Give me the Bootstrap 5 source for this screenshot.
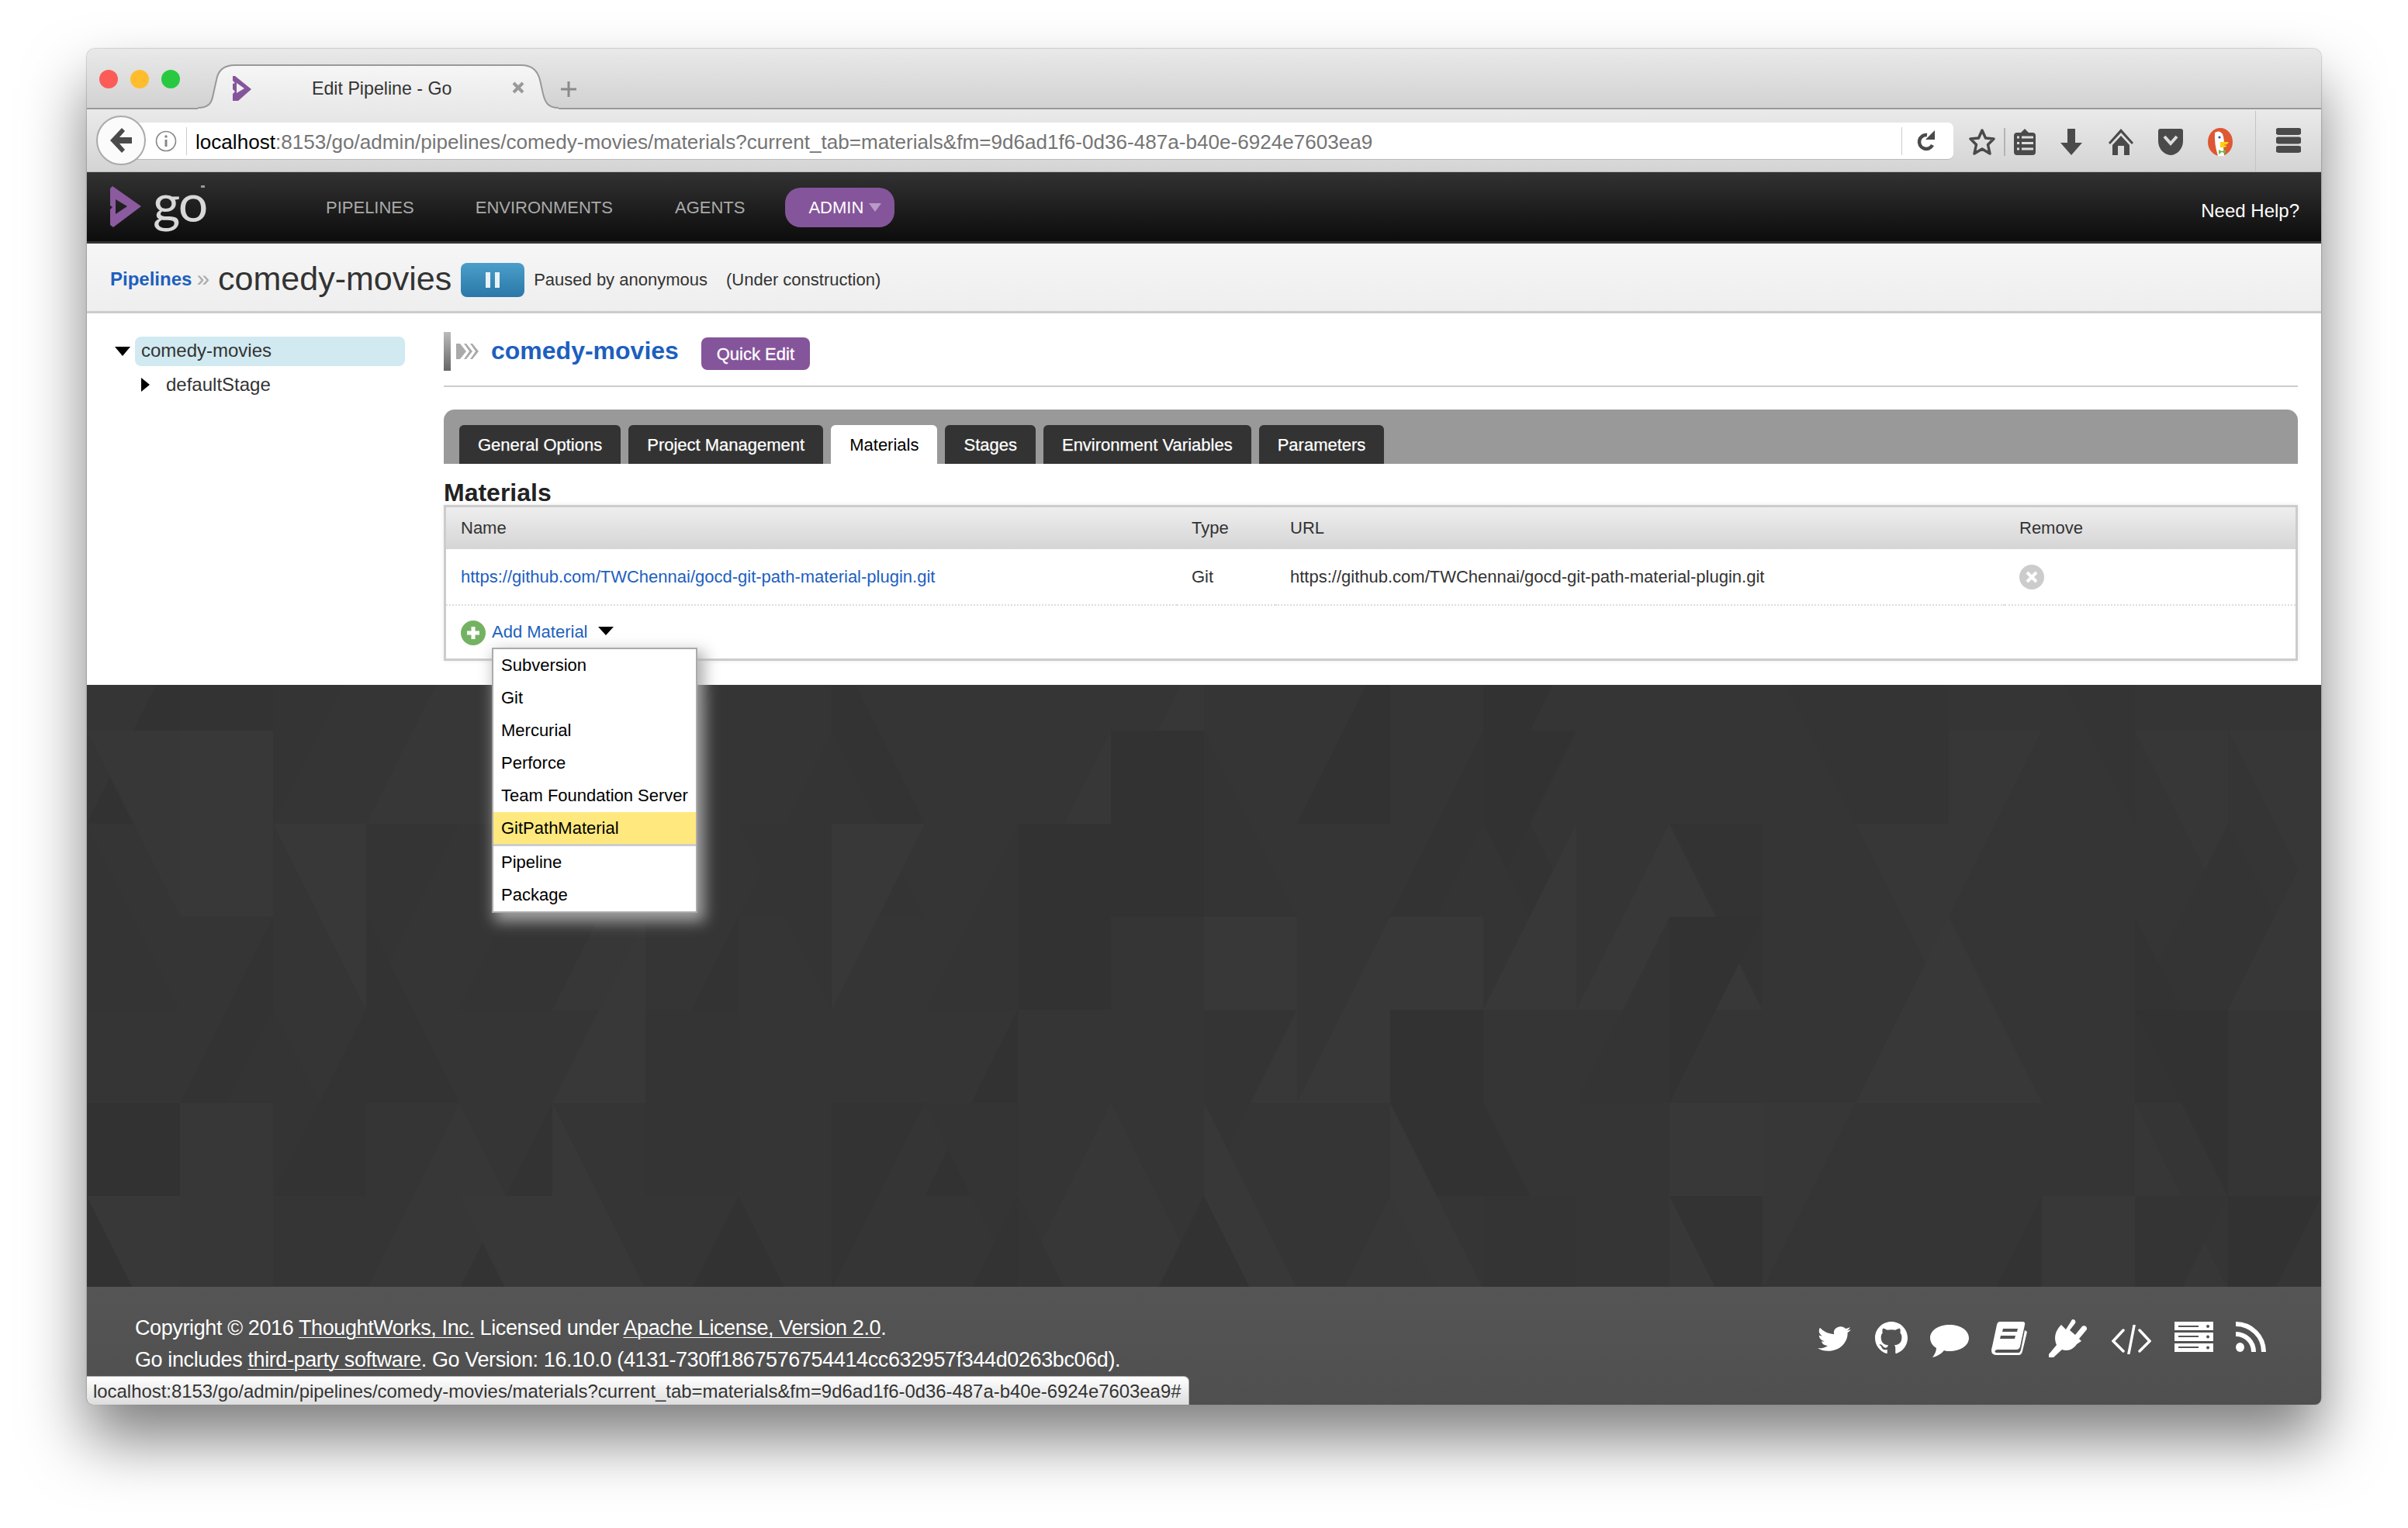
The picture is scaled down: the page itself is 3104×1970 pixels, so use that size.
<!DOCTYPE html>
<html lang="en">
<head>
<meta charset="UTF-8">
<title>Edit Pipeline - Go</title>
<link href="https://cdn.jsdelivr.net/npm/bootstrap@5.3.0/dist/css/bootstrap.min.css" rel="stylesheet">
<style>
    html, body { height: 1970px; }
    body { background: #fff; font-family: "Liberation Sans", Arial, sans-serif; color: #333; font-size: 22px; }
    a { color: #1d5fbf; text-decoration: none; }

    .app-window { width: 2880px; height: 1747px; margin: 0 0 0 112px; top: 63px; border-radius: 10px 10px 8px 8px; box-shadow: 0 46px 80px rgba(0,0,0,.5), 0 0 2px rgba(0,0,0,.5); position: relative; }

    .tab-strip { height: 78px; background: linear-gradient(#e9e9e9, #d2d2d2); border-bottom: 2px solid #999; border-radius: 10px 10px 0 0; padding: 0 0 0 16px; }
    .traffic { width: 24px; height: 24px; border-radius: 50%; margin-right: 16px; margin-top: 27px; }
    .browser-tab { width: 465px; height: 58px; margin: 20px 0 -2px 7px; position: relative; padding-left: 147px; line-height: 63px; font-size: 23.2px; color: #333; }
    .browser-tab .tab-shape { position: absolute; left: 0; top: 0; }
    .browser-tab span { position: relative; }
    .fav-icon { position: absolute; left: 45px; top: 15px; }
    .tab-close { position: absolute; left: 405px; top: 22px; }
    .tab-plus { margin: 42px 0 0 3px; }

    .tool-row { height: 81px; background: linear-gradient(#eaeaea, #d4d4d4); position: relative; padding: 17px 0 0 63px; border-bottom: 1px solid #bdbdbd; }
    .back-round { position: absolute; left: 12px; top: 8px; width: 64px; height: 64px; background: #fbfbfb; border: 2px solid #aaa; border-radius: 50%; z-index: 2; }
    .url-box { width: 2343px; height: 48px; background: #fff; border-radius: 0 7px 7px 0; border-bottom: 1px solid #bbb; padding-left: 25px; }
    .url-info { width: 28px; }
    .url-sep { width: 1px; height: 36px; background: #ccc; }
    .url-text { font-size: 26.1px; color: #757575; margin-left: 11px; white-space: nowrap; line-height: 51px; height: 48px; width: 2199px; }
    .url-text b { font-weight: 400; color: #000; }
    .tool-icons { padding-top: 7px; }
    .tool-slot { display: flex; justify-content: center; align-items: center; height: 34px; }
    .tool-line { width: 2px; height: 36px; background: #b4b4b4; }
    .tool-end { width: 1px; height: 78px; background: #c4c4c4; position: absolute; left: 2795px; top: 2px; }
    .menu-lines { position: absolute; left: 2822px; top: 24px; }

    .go-header { height: 92px; background: linear-gradient(#323232, #0c0c0c); border-bottom: 3px solid #333; padding: 0; }
    .go-logo { width: 260px; height: 89px; position: relative; flex: none; }
    .go-word { position: absolute; left: 85px; top: -2px; font-family: Lato, sans-serif; font-weight: 400; font-size: 68px; color: #d8d8d8; line-height: 80px; letter-spacing: -2px; }
    .go-tm { position: absolute; left: 147px; top: 17px; width: 5px; height: 3px; background: #999; }
    .go-mark { position: absolute; left: 30px; top: 18px; }
    .go-nav.nav-link { font-size: 22px; padding: 0; margin-top: 2px; color: #aaa; line-height: 1; }
    .admin-pill { width: 141px; height: 51px; border-radius: 20px; background: #85559b; color: #fff; margin-left: 52px; padding-left: 30px; margin-top: 2px; }
    .admin-pill i { width: 0; height: 0; border: 8px solid transparent; border-top: 11px solid #b99cc6; border-bottom: 0; margin-left: 7px; }
    .need-help { color: #fff; font-size: 24px; margin-right: 28px; margin-top: 10px; }

    .crumb-bar { height: 90px; background: linear-gradient(#f6f6f6, #eee); border-bottom: 3px solid #ccc; padding: 6px 0 0 30px; }
    .crumb-link { font-weight: 700; font-size: 24px; margin-top: -2px; }
    .crumb-sep { color: #aaa; font-size: 30px; margin: -4px 11px 0 6px; line-height: 1; }
    .crumb-title { font-size: 43px; color: #333; margin-right: 12px; line-height: 1; margin-top: -2px; }
    .pause-btn { width: 82px; height: 44px; border-radius: 8px; background: linear-gradient(#4b9eca, #2a78a8); gap: 6px; }
    .pause-btn i { width: 6px; height: 20px; background: #e8f2f8; }
    .crumb-note { font-size: 22px; margin-left: 12px; }

    .work-area { height: 479px; background: #fff; position: relative; }
    .side-tree { width: 460px; flex: none; padding: 30px 0 0 36px; font-size: 24px; color: #333; }
    .tree-down { width: 0; height: 0; border: 10px solid transparent; border-top: 12px solid #000; border-bottom: 0; margin-right: 6px; }
    .tree-pill { width: 348px; height: 38px; line-height: 36px; background: #d1e9f0; border-radius: 8px; padding-left: 8px; }
    .tree-right { width: 0; height: 0; border: 9px solid transparent; border-left: 11px solid #000; border-right: 0; margin-left: 34px; margin-right: 21px; }
    .tree-child { margin-top: 4px; height: 40px; line-height: 40px; }

    .main-col { width: 2390px; flex: none; padding-top: 24px; }
    .page-head { height: 71px; border-bottom: 2px solid #ccc; position: relative; }
    .head-bar { width: 9px; height: 50px; background: linear-gradient(#bbb, #666); }
    .head-arrows { margin: 13px 0 0 4px; }
    .head-title { font-size: 32px; font-weight: 700; margin: -1px 29px 0 12px; line-height: 50px; }
    .quick-btn { width: 140px; height: 42px; padding: 0; background: #85559b; border: 0; border-radius: 8px; color: #fff; font-size: 22px; margin-top: 7px; -webkit-text-stroke: .3px #fff; }
    .tab-panel { margin-top: 29px; height: 70px; background: #999; border-radius: 14px 14px 0 0; padding: 20px 0 0 20px; border: 0; gap: 10px; flex-wrap: nowrap; }
    .tab-panel .nav-link { height: 50px; line-height: 51px; padding: 0 24px; border: 0; border-radius: 6px 6px 0 0; background: #333; color: #fff; font-size: 22px; margin: 0; -webkit-text-stroke: .25px #fff; }
    .tab-panel .nav-link.active { background: #fff; color: #000; -webkit-text-stroke: 0; }
    .tab-panel .nav-item { margin: 0; }
    .section-title { font-size: 32px; font-weight: 700; color: #222; margin: 19px 0 0; line-height: 36px; height: 34px; }
    .mat-box { border: 3px solid #ccc; height: 201px; background: #fff; box-shadow: 0 0 6px rgba(0,0,0,.08); }
    .mat-table { margin: 0; table-layout: fixed; width: 100%; font-size: 22px; color: #333; }
    .mat-table th { height: 54px; font-weight: 400; background: linear-gradient(#eee, #d5d5d5); padding: 0 0 2px 19px; border: 0; vertical-align: middle; box-shadow: none; color: #333; }
    .mat-table td { height: 72px; padding: 0 0 0 19px; border: 0; border-bottom: 2px dotted #ddd; vertical-align: middle; box-shadow: none; color: #333; }
    .remove-dot { width: 32px; height: 32px; border-radius: 50%; background: #ccc; }
    .add-row { padding: 6px 0 0 19px; height: 63px; }
    .add-caret { width: 0; height: 0; border: 10px solid transparent; border-top: 11px solid #000; border-bottom: 0; margin: 0 0 4px 13px; }
    .add-link { margin-left: 8px; margin-top: -2px; }
    .add-menu { position: absolute; left: 522px; top: 431px; width: 265px; padding: 0; margin: 0; border: 2px solid #aaa; border-radius: 0; display: block; box-shadow: 6px 8px 18px 3px rgba(170,170,170,.95); font-size: 22px; z-index: 5; height: 342px; }
    .add-menu .dropdown-item { height: 42px; line-height: 42px; padding: 0 0 0 10px; color: #000; }
    .add-menu .dropdown-item.picked { background: #ffe97f; height: 44px; border-bottom: 3px solid #ccc; line-height: 41px; }

    .dark-zone { height: 776px; background: #353535; position: relative; overflow: hidden; }
    .dark-zone svg { position: absolute; left: 0; top: 0; }

    .go-footer { height: 152px; background: linear-gradient(#555, #4f4f4f); color: #fff; position: relative; padding: 33px 32px 0 62px; font-size: 27px; border-radius: 0 0 8px 8px; }
    .go-footer a { color: #fff; text-decoration: underline; text-underline-offset: 3px; text-decoration-thickness: 1px; }
    .foot-text { line-height: 41px; letter-spacing: -.39px; white-space: nowrap; }
    .foot-icons { position: absolute; left: 2231px; top: 40px; }
    .foot-icons svg { position: absolute; }
    .status-tip { position: absolute; left: 0; bottom: 0; width: 1421px; height: 37px; line-height: 37px; background: linear-gradient(#fff, #ddd); border: 1px solid #aaa; border-left: 0; border-bottom: 0; border-radius: 0 7px 0 8px; color: #333; padding-left: 8px; font-size: 23.9px; white-space: nowrap; }
</style>
</head>
<body>
<div class="app-window">

    <div class="tab-strip d-flex align-items-start">
        <div class="traffic" style="background:#fc5b57"></div>
        <div class="traffic" style="background:#ffbd2e"></div>
        <div class="traffic" style="background:#28c940"></div>
        <div class="browser-tab">
            <svg class="tab-shape" width="465" height="58" viewBox="0 0 465 58">
                <defs><linearGradient id="tabfill" x1="0" y1="0" x2="0" y2="1"><stop offset="0" stop-color="#f6f6f6"/><stop offset="1" stop-color="#e9e9e9"/></linearGradient></defs>
                <path d="M0 56C14 56 18 50 20 38L24 20C26 8 34 1 48 1H417C431 1 438 8 441 20L445 38C448 50 452 56 465 56V58H0Z" fill="url(#tabfill)"/>
                <path d="M0 56C14 56 18 50 20 38L24 20C26 8 34 1 48 1H417C431 1 438 8 441 20L445 38C448 50 452 56 465 56" fill="none" stroke="#999" stroke-width="2"/>
            </svg>
            <svg class="fav-icon" width="24" height="32" viewBox="0 0 24 32"><path d="M0 0L3 0 24 17 7 32H0V23L3 20 0 17V10L3 9 0 6ZM5 9V22L15 16Z" fill="#85559b" fill-rule="evenodd"/></svg>
            <span>Edit Pipeline - Go</span>
            <svg class="tab-close" width="16" height="16" viewBox="0 0 16 16"><path d="M2 2L14 14M14 2L2 14" stroke="#999" stroke-width="4"/></svg>
        </div>
        <svg class="tab-plus" width="20" height="20" viewBox="0 0 20 20"><path d="M10 0V20M0 10H20" stroke="#8a8a8a" stroke-width="3"/></svg>
    </div>

    <div class="tool-row d-flex align-items-start">
        <div class="back-round d-flex align-items-center justify-content-center">
            <svg width="28" height="32" viewBox="0 0 28 32"><path d="M15 0L0 16 15 32 19 28 12 20H28V12H12L19 4Z" fill="#4a4a4a"/></svg>
        </div>
        <div class="url-box d-flex align-items-center">
            <svg class="url-info" width="28" height="28" viewBox="0 0 28 28"><circle cx="14" cy="14" r="12.5" fill="none" stroke="#888" stroke-width="1.6"/><circle cx="14" cy="8" r="1.8" fill="#888"/><path d="M14 12V21" stroke="#888" stroke-width="3"/></svg>
            <div class="url-sep" style="margin-left:12px"></div>
            <div class="url-text"><b>localhost</b>:8153/go/admin/pipelines/comedy-movies/materials?current_tab=materials&amp;fm=9d6ad1f6-0d36-487a-b40e-6924e7603ea9</div>
            <div class="url-sep"></div>
            <svg style="margin-left:19px" width="24" height="30" viewBox="0 0 24 30"><path d="M20 20A9 9 0 1 1 13 7" fill="none" stroke="#4a4a4a" stroke-width="4.5"/><path d="M11 13L23 1V13Z" fill="#4a4a4a"/></svg>
        </div>
        <div class="tool-icons d-flex align-items-center">
            <div class="tool-slot justify-content-start" style="width:65px;padding-left:20px"><svg width="34" height="34" viewBox="0 0 34 34"><path d="M17 2L21.500 12 32 13 24.500 20.500 27 32 17 26 7 32 9.500 20.500 2 13 12.500 12Z" fill="none" stroke="#4a4a4a" stroke-width="3.500" stroke-linejoin="round"/></svg></div>
            <div class="tool-line"></div>
            <div class="tool-slot" style="width:50px"><svg width="28" height="34" viewBox="0 0 28 34"><path d="M14 0L19 5H24Q28 5 28 9V30Q28 34 24 34H4Q0 34 0 30V9Q0 5 4 5H9Z" fill="#4a4a4a"/><path d="M10 11H25M10 18.500H25M10 26H25" stroke="#ddd" stroke-width="3"/><path d="M4 11H7M4 18.500H7M4 26H7" stroke="#ddd" stroke-width="3"/></svg></div>
            <div class="tool-slot" style="width:70px"><svg width="30" height="34" viewBox="0 0 30 34"><path d="M10 0H20V18H29L15 34 1 18H10Z" fill="#4a4a4a"/></svg></div>
            <div class="tool-slot" style="width:58px"><svg width="34" height="34" viewBox="0 0 34 34"><path d="M17 0L33 18 31 20 17 5 3 20 1 18Z" fill="#4a4a4a"/><path d="M17 9L28 21V34H21V22H13V34H6V21Z" fill="#4a4a4a"/></svg></div>
            <div class="tool-slot" style="width:70px"><svg width="32" height="34" viewBox="0 0 32 34"><path d="M3 0H29Q32 0 32 3V16C32 26 24 34 16 34S0 26 0 16V3Q0 0 3 0Z" fill="#4a4a4a"/><path d="M8 10L16 19 24 10" fill="none" stroke="#ddd" stroke-width="4"/></svg></div>
            <div class="tool-slot" style="width:58px"><svg width="32" height="36" viewBox="0 0 32 36"><ellipse cx="16" cy="18" rx="16" ry="18" fill="#de5833"/><path d="M9 6Q15 2 19 8 22 16 20 24L21 36H13Q8 20 9 6Z" fill="#fff"/><circle cx="15" cy="12" r="1.600" fill="#2d4f8e"/><path d="M16 18H27L25 21 20 22 25 23 22 25H16Z" fill="#fdd20a"/><path d="M14 28L18 30 23 28V33L18 31 14 34Z" fill="#65bc46"/></svg></div>
        </div>
        <div class="tool-end"></div>
        <svg class="menu-lines" width="32" height="32" viewBox="0 0 32 32"><path d="M3 0H29A3 3 0 0 1 29 9H3A3 3 0 0 1 3 0ZM3 11.500H29A3 3 0 0 1 29 20.500H3A3 3 0 0 1 3 11.500ZM3 23H29A3 3 0 0 1 29 32H3A3 3 0 0 1 3 23Z" fill="#4a4a4a"/></svg>
    </div>

    <nav class="go-header navbar align-items-center flex-nowrap">
        <div class="go-logo">
            <svg class="go-mark" width="40" height="53" viewBox="0 0 40 53"><path d="M0 3L3 0 40 26 4 53 0 50V30L3 27 0 25ZM7 17V36L22 26Z" fill="#8c5a9f" fill-rule="evenodd"/></svg>
            <span class="go-word">go</span>
            <span class="go-tm"></span>
        </div>
        <a class="nav-link go-nav" style="margin-left:48px" href="#">PIPELINES</a>
        <a class="nav-link go-nav" style="margin-left:79px" href="#">ENVIRONMENTS</a>
        <a class="nav-link go-nav" style="margin-left:80px" href="#">AGENTS</a>
        <div class="admin-pill d-flex align-items-center">ADMIN<i></i></div>
        <a class="need-help ms-auto" href="#">Need Help?</a>
    </nav>

    <div class="crumb-bar d-flex align-items-center">
        <a class="crumb-link" href="#">Pipelines</a>
        <span class="crumb-sep">»</span>
        <span class="crumb-title">comedy-movies</span>
        <div class="pause-btn d-flex align-items-center justify-content-center"><i></i><i></i></div>
        <span class="crumb-note">Paused by anonymous</span>
        <span class="crumb-note" style="margin-left:24px">(Under construction)</span>
    </div>

    <div class="work-area d-flex">
        <div class="side-tree">
            <div class="d-flex align-items-center"><span class="tree-down"></span><div class="tree-pill">comedy-movies</div></div>
            <div class="d-flex align-items-center tree-child"><span class="tree-right"></span>defaultStage</div>
        </div>
        <div class="main-col">
            <div class="page-head d-flex align-items-start">
                <div class="head-bar"></div>
                <svg class="head-arrows" width="36" height="24" viewBox="0 0 30 24"><path d="M0 2H5L13 12 5 22H0ZM10 2H13L21 12 13 22H10L17 12ZM18 2H21L29 12 21 22H18L25 12Z" fill="#aaa"/></svg>
                <a class="head-title" href="#">comedy-movies</a>
                <button class="btn quick-btn" type="button">Quick Edit</button>
            </div>
            <ul class="nav nav-tabs tab-panel">
                <li class="nav-item"><a class="nav-link" href="#">General Options</a></li>
                <li class="nav-item"><a class="nav-link" href="#">Project Management</a></li>
                <li class="nav-item"><a class="nav-link active" href="#">Materials</a></li>
                <li class="nav-item"><a class="nav-link" href="#">Stages</a></li>
                <li class="nav-item"><a class="nav-link" href="#">Environment Variables</a></li>
                <li class="nav-item"><a class="nav-link" href="#">Parameters</a></li>
            </ul>
            <h3 class="section-title">Materials</h3>
            <div class="mat-box">
                <table class="table mat-table">
                    <thead>
                        <tr><th style="width:942px">Name</th><th style="width:127px">Type</th><th style="width:940px">URL</th><th>Remove</th></tr>
                    </thead>
                    <tbody>
                        <tr>
                            <td><a href="#">https://github.com/TWChennai/gocd-git-path-material-plugin.git</a></td>
                            <td>Git</td>
                            <td>https://github.com/TWChennai/gocd-git-path-material-plugin.git</td>
                            <td><div class="remove-dot d-flex align-items-center justify-content-center"><svg width="16" height="16" viewBox="0 0 16 16"><path d="M2 2L14 14M14 2L2 14" stroke="#fff" stroke-width="4"/></svg></div></td>
                        </tr>
                    </tbody>
                </table>
                <div class="add-row d-flex align-items-center">
                    <svg width="32" height="32" viewBox="0 0 32 32"><circle cx="16" cy="16" r="16" fill="#74b263"/><path d="M16 8V24M8 16H24" stroke="#fff" stroke-width="5"/></svg>
                    <a class="add-link" href="#">Add Material</a>
                    <span class="add-caret"></span>
                </div>
            </div>
        </div>
        <div class="dropdown-menu add-menu">
            <a class="dropdown-item" href="#">Subversion</a>
            <a class="dropdown-item" href="#">Git</a>
            <a class="dropdown-item" href="#">Mercurial</a>
            <a class="dropdown-item" href="#">Perforce</a>
            <a class="dropdown-item" href="#">Team Foundation Server</a>
            <a class="dropdown-item picked" href="#">GitPathMaterial</a>
            <a class="dropdown-item" href="#">Pipeline</a>
            <a class="dropdown-item" href="#">Package</a>
        </div>
    </div>

    <div class="dark-zone">
        <svg id="pattern" width="2880" height="776" viewBox="0 0 2880 776"></svg>
    </div>

    <footer class="go-footer">
        <div class="foot-text">Copyright © 2016 <a href="#">ThoughtWorks, Inc.</a> Licensed under <a href="#">Apache License, Version 2.0</a>.</div>
        <div class="foot-text">Go includes <a href="#">third-party software</a>. Go Version: 16.10.0 (4131-730ff1867576754414cc632957f344d0263bc06d).</div>
        <div class="foot-icons">
            <svg style="left:0;top:9px" width="43" height="35" viewBox="0 1 16 14.500" preserveAspectRatio="none"><path fill="#fff" d="M5.026 15c6.038 0 9.341-5.003 9.341-9.334 0-.14 0-.282-.006-.422A6.685 6.685 0 0 0 16 3.542a6.658 6.658 0 0 1-1.889.518 3.301 3.301 0 0 0 1.447-1.817 6.533 6.533 0 0 1-2.087.793A3.286 3.286 0 0 0 7.875 6.03a9.325 9.325 0 0 1-6.767-3.429 3.289 3.289 0 0 0 1.018 4.382A3.323 3.323 0 0 1 .64 6.575v.045a3.288 3.288 0 0 0 2.632 3.218 3.203 3.203 0 0 1-.865.115 3.23 3.23 0 0 1-.614-.057 3.283 3.283 0 0 0 3.067 2.277A6.588 6.588 0 0 1 .78 13.58a6.32 6.32 0 0 1-.78-.045A9.344 9.344 0 0 0 5.026 15z"/></svg>
            <svg style="left:74px;top:5px" width="42" height="42" viewBox="0 0 16 16"><path fill="#fff" d="M8 0C3.58 0 0 3.58 0 8c0 3.54 2.29 6.53 5.47 7.59.4.07.55-.17.55-.38 0-.19-.01-.82-.01-1.49-2.01.37-2.53-.49-2.69-.94-.09-.23-.48-.94-.82-1.13-.28-.15-.68-.52-.01-.53.63-.01 1.08.58 1.23.82.72 1.21 1.87.87 2.33.66.07-.52.28-.87.51-1.07-1.78-.2-3.64-.89-3.64-3.95 0-.87.31-1.59.82-2.15-.08-.2-.36-1.02.08-2.12 0 0 .67-.21 2.2.82.64-.18 1.32-.27 2-.27.68 0 1.36.09 2 .27 1.53-1.04 2.2-.82 2.2-.82.44 1.1.16 1.92.08 2.12.51.56.82 1.27.82 2.15 0 3.07-1.87 3.75-3.65 3.95.29.25.54.73.54 1.48 0 1.07-.01 1.93-.01 2.2 0 .21.15.46.55.38A8.013 8.013 0 0016 8c0-4.42-3.58-8-8-8z"/></svg>
            <svg style="left:145px;top:9px" width="50" height="42" viewBox="0 0 50 42"><path fill="#fff" d="M25 0C39 0 50 7 50 17S39 34 25 34C22 34 20 34 18 33 14 38 8 41 3 42 6 38 8 34 8 30 3 27 0 22 0 17 0 7 11 0 25 0Z"/></svg>
            <svg style="left:224px;top:5px" width="46" height="43" viewBox="0 0 46 43"><path fill="#fff" d="M11 0H40Q44 0 43 4L37 32Q36 36 32 36H8Q5 36 4.500 38T8 40H35Q37 40 38 36L43 11 46 13 40 38Q39 43 35 43H7Q0 43 0 37 0 35 1 32L7 4Q8 0 11 0ZM15 9L14 13H33L34 9ZM12 18L11 22H30L31 18Z" fill-rule="evenodd"/></svg>
            <svg style="left:298px;top:2px" width="51" height="49" viewBox="0 0 51 49"><path fill="#fff" d="M31 0C34 0 35 3 34 5L27 14 34 20 43 9C45 7 50 9 49 13L39 25 42 28 36 32C32 38 25 42 17 39L6 49H0V45L10 33C6 24 8 15 16 7L22 13 29 2C29 1 30 0 31 0Z"/></svg>
            <svg style="left:379px;top:9px" width="51" height="38" viewBox="0 0 51 38"><path d="M15 7L2 21 15 34M36 7L49 21 36 34M29 1L22 37" fill="none" stroke="#fff" stroke-width="3.500" stroke-linecap="round"/></svg>
            <svg style="left:460px;top:5px" width="50" height="39" viewBox="0 0 50 39"><path fill="#fff" fill-rule="evenodd" d="M0 0H50V11H0ZM5 5V7H31V5ZM43 4A2 2 0 1 0 43.100 4ZM0 14H50V25H0ZM5 18V20H31V18ZM43 17.500A2 2 0 1 0 43.100 17.500ZM0 28H50V39H0ZM5 32V34H31V32ZM43 31.500A2 2 0 1 0 43.100 31.500Z"/></svg>
            <svg style="left:539px;top:5px" width="39" height="39" viewBox="0 0 39 39"><path d="M0 3C20 3 36 19 36 39M0 16C13 16 23 26 23 39" fill="none" stroke="#fff" stroke-width="6"/><ellipse cx="5.500" cy="33" rx="5.500" ry="6" fill="#fff"/></svg>
        </div>
        <div class="status-tip">localhost:8153/go/admin/pipelines/comedy-movies/materials?current_tab=materials&amp;fm=9d6ad1f6-0d36-487a-b40e-6924e7603ea9#</div>
    </footer>
</div>

<script>
    // faint triangle pattern behind the dark area, 120px tiles with a fixed seed
    var svg = document.getElementById("pattern");
    var out = "";
    var seed = 11;
    function next() { seed = (seed * 16807) % 2147483647; return seed / 2147483647; }
    var shades = ["#323232", "#333333", "#373737", "#383838", "#343434"];
    for (var row = 0; row < 8; row++) {
        for (var col = 0; col < 25; col++) {
            var x = col * 120, y = row * 120 - 61;
            var c = shades[Math.floor(next() * shades.length)];
            var kind = Math.floor(next() * 12);
            var pts = "";
            if (kind === 0) pts = [x, y, x + 120, y, x + 120, y + 240, x, y + 240];
            if (kind === 1) pts = [x, y, x + 120, y + 240, x, y + 240];
            if (kind === 2) pts = [x + 120, y, x + 120, y + 240, x, y + 240];
            if (kind === 3) pts = [x, y, x + 120, y, x + 120, y + 240];
            if (kind === 4) pts = [x, y, x + 120, y, x, y + 240];
            if (kind === 5) pts = [x, y + 240, x + 120, y, x + 240, y + 240];
            if (pts) out += '<polygon points="' + pts.join(" ") + '" fill="' + c + '"/>';
        }
    }
    svg.innerHTML = out;
</script>
<script src="https://cdn.jsdelivr.net/npm/bootstrap@5.3.0/dist/js/bootstrap.bundle.min.js"></script>
</body>
</html>
